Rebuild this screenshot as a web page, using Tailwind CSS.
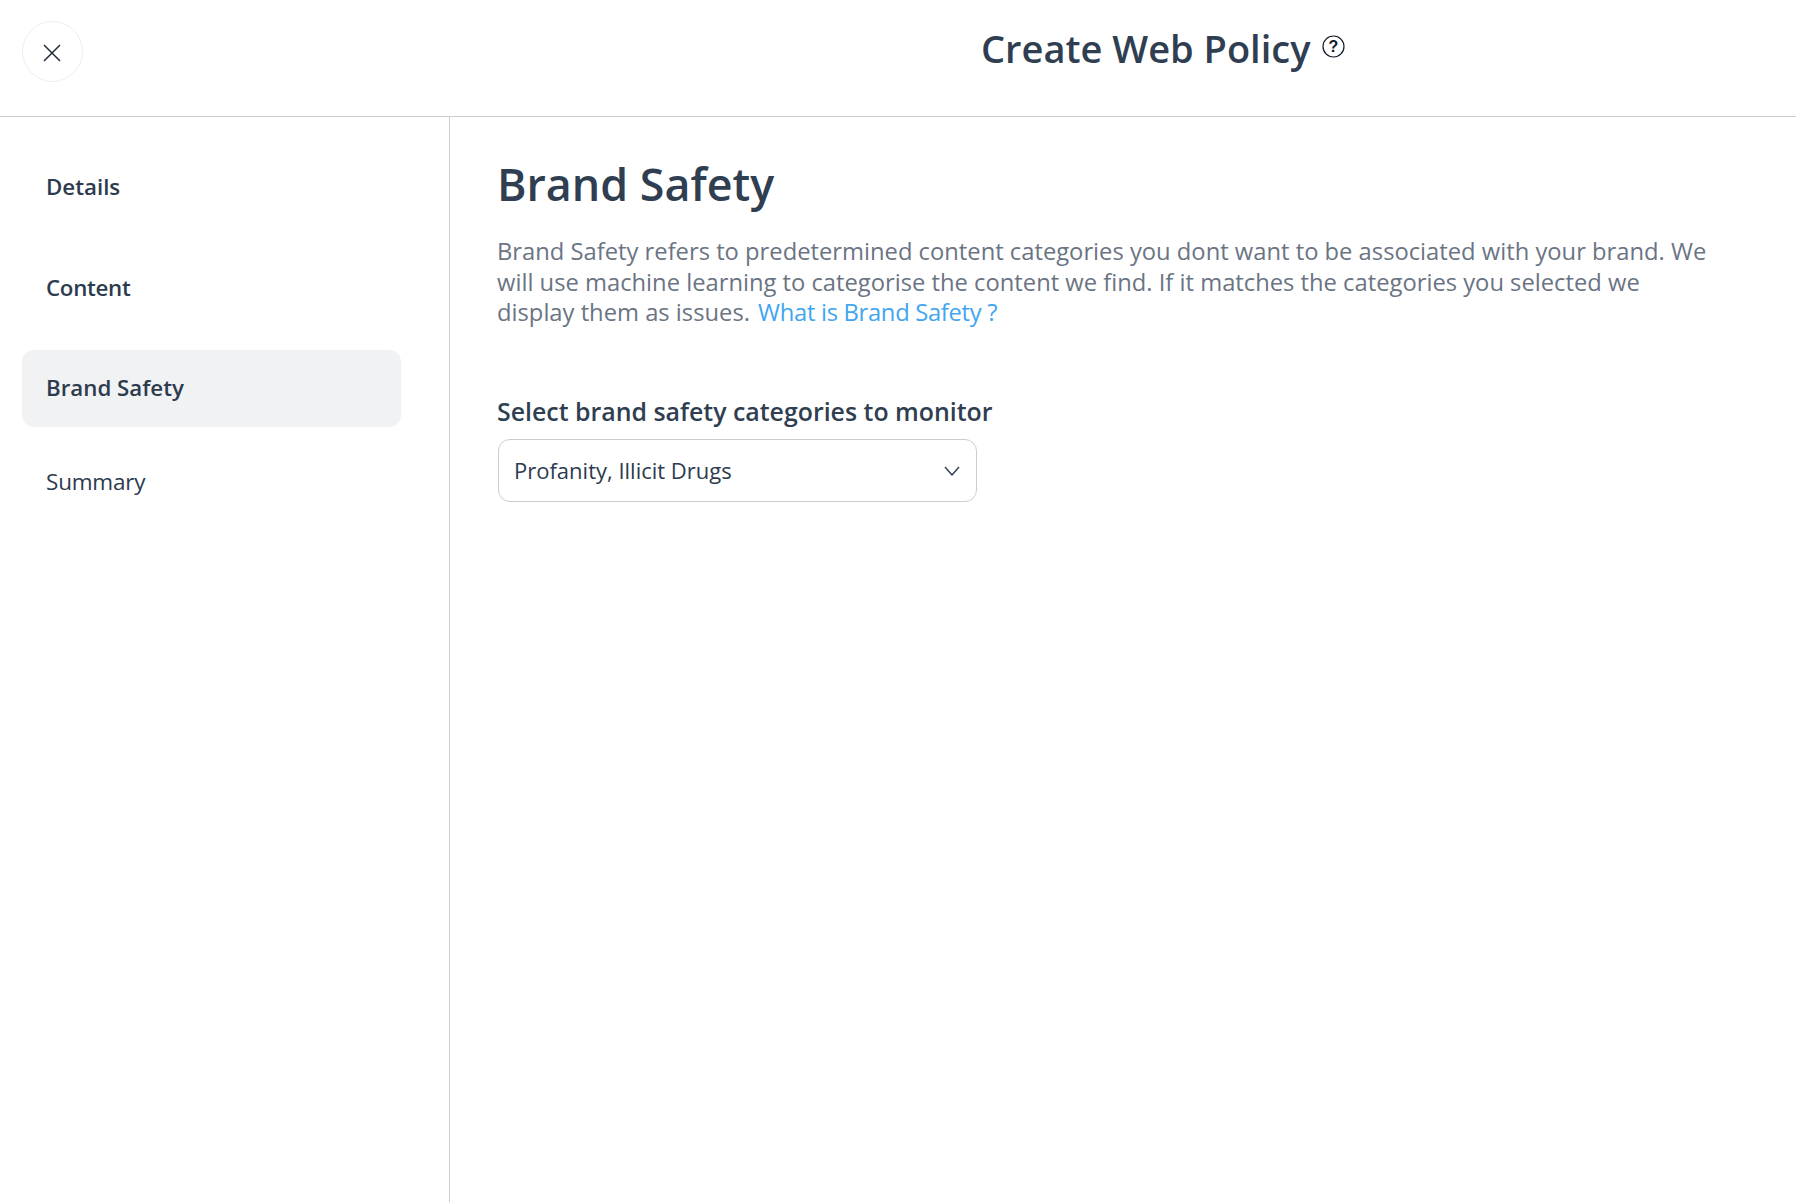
<!DOCTYPE html>
<html lang="en">
<head>
    <meta charset="UTF-8">
    <title>Create Web Policy</title>
    <script src="https://cdn.jsdelivr.net/npm/@tailwindcss/browser@4"></script>
</head>
<body class="bg-white font-['Open_Sans',sans-serif] text-[#2d3b4e] h-screen overflow-hidden flex flex-col">

    <!-- Header -->
    <header class="relative h-[117px] shrink-0 border-b border-[#cbcdd0] flex items-start">
        <button class="ml-[22px] mt-[21px] w-[61px] h-[61px] rounded-full border border-[#eceef0] flex items-center justify-center">
            <svg class="-ml-[1px] mt-[2px]" width="18" height="18" viewBox="0 0 18 18" fill="none" stroke="#1f2937" stroke-width="1.5"><path d="M1 1l16 16M17 1L1 17"/></svg>
        </button>
        <div class="absolute left-[981px] top-[22px] flex items-start">
            <h1 class="text-[38px] leading-[52px] font-semibold text-[#2f3e50]">Create Web Policy</h1>
            <svg class="ml-[11px] mt-[13px]" width="23" height="23" viewBox="0 0 23 23"><circle cx="11.5" cy="11.5" r="10.5" fill="none" stroke="#111827" stroke-width="1.2"/><text x="11.5" y="17" text-anchor="middle" font-family="Liberation Sans" font-weight="700" font-size="16" fill="#111827">?</text></svg>
        </div>
    </header>

    <div class="flex flex-1 min-h-0">
        <!-- Sidebar -->
        <aside class="w-[450px] shrink-0 border-r border-[#cbcdd0] pt-[37px] pl-[22px] pr-[48px]">
            <nav class="flex flex-col text-[22.3px] font-semibold text-[#2d3b4e]">
                <a class="h-[67px] pl-[24px] pb-[2px] flex items-center">Details</a>
                <a class="h-[67px] mt-[34px] pl-[24px] pb-[2px] flex items-center tracking-[-0.3px]">Content</a>
                <a class="h-[77px] mt-[28px] pl-[24px] pb-[2px] flex items-center bg-[#f1f2f4] rounded-xl">Brand Safety</a>
                <a class="h-[67px] mt-[21px] pl-[24px] flex items-center font-normal text-[22.5px] tracking-[-0.2px]">Summary</a>
            </nav>
        </aside>

        <!-- Main -->
        <main class="flex-1 pl-[47px] pt-[37px] pr-[60px]">
            <h2 class="text-[44.8px] leading-[60px] font-semibold text-[#2f3e50]">Brand Safety</h2>
            <p class="mt-[22px] text-[23.75px] leading-[30.5px] text-[#6b7483] max-w-[1220px]">Brand Safety refers to predetermined content categories you dont want to be associated with your brand. We will use machine learning to categorise the content we find. If it matches the categories you selected we display them as issues. <a class="ml-[2px] text-[#42a5f0] tracking-[-0.3px]">What is Brand Safety ?</a></p>
            <label class="block mt-[66px] text-[24.9px] leading-[34px] font-semibold text-[#2f3e50]">Select brand safety categories to monitor</label>
            <div class="mt-[11px] ml-[1px] w-[479px] h-[63px] border border-[#cbcdd0] rounded-xl pl-[15px] pr-[16px] flex items-center justify-between">
                <span class="text-[22px] text-[#2d3b4e]">Profanity, Illicit Drugs</span>
                <svg class="mt-[1px]" width="16" height="10" viewBox="0 0 16 10" fill="none" stroke="#2d3b4e" stroke-width="1.4"><path d="M1 1l7 8 7-8"/></svg>
            </div>
        </main>
    </div>
</body>
</html>
